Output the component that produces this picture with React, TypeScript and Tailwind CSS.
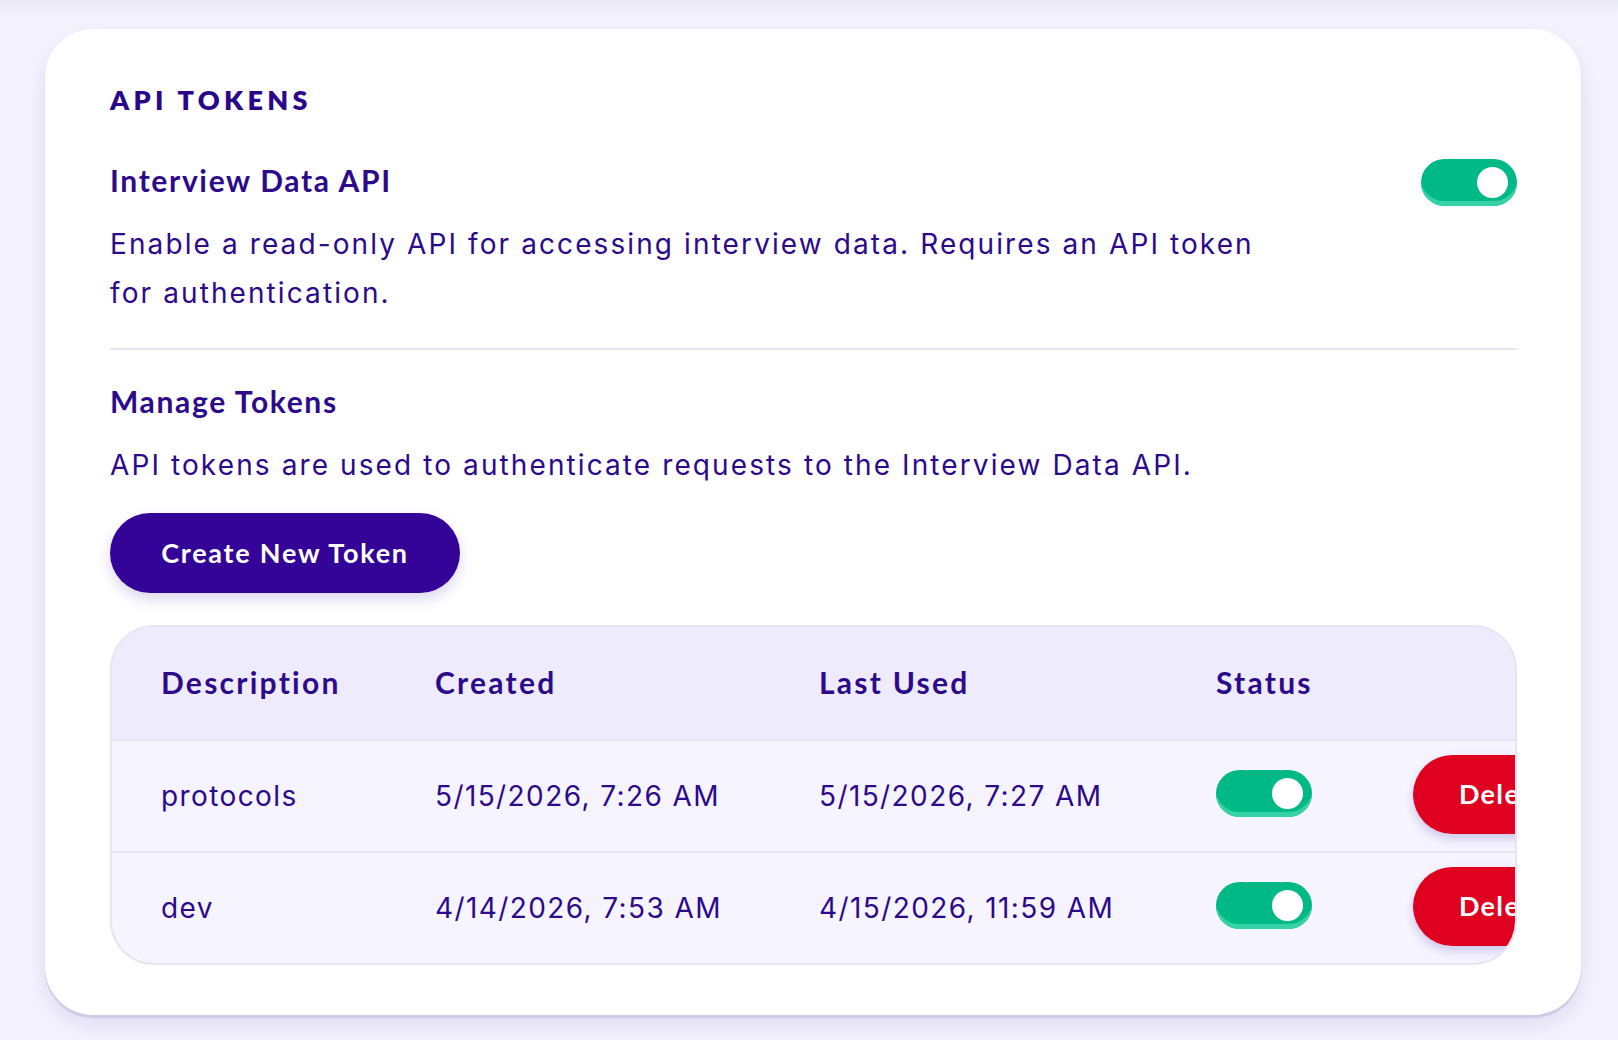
import React from "react";

const heading = { fontFamily: "Lato, 'Noto Sans', sans-serif" };
const body = { fontFamily: "Inter, 'Noto Sans', sans-serif" };

function Toggle() {
  return (
    <div className="relative h-[47px] w-[96px] shrink-0 rounded-full bg-[#00b986] shadow-[inset_0_-6px_0_-1px_#34d2a6]">
      <div className="absolute right-[9px] top-[8px] h-[31px] w-[31px] rounded-full bg-white" />
    </div>
  );
}

const rows = [
  { d: "protocols", c: "5/15/2026, 7:26 AM", l: "5/15/2026, 7:27 AM" },
  { d: "dev", c: "4/14/2026, 7:53 AM", l: "4/15/2026, 11:59 AM" },
];

export default function App() {
  return (
    <div className="min-h-[1040px] w-full overflow-hidden bg-[#f4f3fd] text-[#2c0a8a]">
      <div className="h-[20px] w-full bg-gradient-to-b from-[#ebe9f7] to-[#f4f3fd]" />
      <div className="ml-[45px] mr-[37px] mt-[9px] rounded-[48px] bg-white pb-[50px] pl-[65px] pr-[64px] pt-[55px] shadow-[0_3px_1px_#cfcae6,0_10px_22px_rgba(90,70,180,0.14)]">
        <div
          className="text-[27px] font-extrabold uppercase leading-[32px] tracking-[0.16em] text-[#2a0788]"
          style={heading}
        >
          API Tokens
        </div>
        <div className="mt-[40px] flex h-[47px] items-center justify-between">
          <div className="text-[30px] font-bold leading-[40px] tracking-[0.055em]" style={heading}>
            Interview Data API
          </div>
          <div className="mt-[6px]">
            <Toggle />
          </div>
        </div>
        <p className="mt-[17px] max-w-[1170px] text-[28px] leading-[49px] tracking-[0.075em]" style={body}>
          Enable a read-only API for accessing interview data. Requires an API token for authentication.
        </p>
        <div className="mt-[30px] h-[2px] w-full bg-[#e6e4f3]" />
        <div className="mt-[31px] text-[30px] font-bold leading-[40px] tracking-[0.055em]" style={heading}>
          Manage Tokens
        </div>
        <p className="mt-[20px] text-[28px] leading-[48px] tracking-[0.075em]" style={body}>
          API tokens are used to authenticate requests to the Interview Data API.
        </p>
        <button
          className="mt-[24px] flex h-[80px] w-[350px] items-center justify-center rounded-full bg-[#330497] text-[27px] font-bold tracking-[0.065em] text-white shadow-[0_6px_14px_rgba(90,70,180,0.22)]"
          style={heading}
        >
          Create New Token
        </button>
        <div className="mt-[32px] h-[340px] w-full overflow-hidden rounded-[44px] border-2 border-[#e6e3f5] bg-[#f6f4fe]">
          <div
            className="flex h-[112px] items-center bg-[#eeebfd] pb-[2px] text-[30px] font-bold tracking-[0.075em]"
            style={heading}
          >
            <div className="w-[275px] shrink-0 pl-[49px]">Description</div>
            <div className="w-[384px] shrink-0 pl-[48px]">Created</div>
            <div className="w-[397px] shrink-0 pl-[48px]">Last Used</div>
            <div className="w-[197px] shrink-0 pl-[48px]">Status</div>
            <div className="w-[240px] shrink-0" />
          </div>
          {rows.map((r) => (
            <div
              key={r.d}
              className="flex h-[112px] items-center border-t-2 border-[#e6e3f3] text-[28px] tracking-[0.05em]"
              style={body}
            >
              <div className="w-[275px] shrink-0 pl-[49px]">{r.d}</div>
              <div className="w-[384px] shrink-0 pl-[48px]">{r.c}</div>
              <div className="w-[397px] shrink-0 pl-[48px]">{r.l}</div>
              <div className="w-[197px] shrink-0 pl-[48px]">
                <div className="mb-[6px]">
                  <Toggle />
                </div>
              </div>
              <div className="w-[260px] shrink-0 pl-[48px]">
                <button
                  className="mb-[4px] flex h-[79px] w-[180px] items-center justify-center rounded-full bg-[#e0001f] text-[27px] font-bold tracking-[0.05em] text-white shadow-[0_5px_10px_rgba(90,70,180,0.25)]"
                  style={heading}
                >
                  Delete
                </button>
              </div>
            </div>
          ))}
        </div>
      </div>
    </div>
  );
}
